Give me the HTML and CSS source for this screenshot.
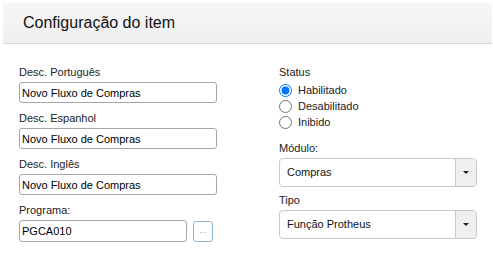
FILE: index.html
```html
<!DOCTYPE html>
<html lang="pt">
<head>
    <meta charset="UTF-8">
    <title>Configuração do item</title>
    <link rel="stylesheet" href="styles.css">
</head>
<body>
    <header class="panel-header">
        <h1>Configuração do item</h1>
    </header>

    <div class="item-form">
        <div class="col col-left">
            <label class="field-label">Desc. Português</label>
            <input class="text-input" type="text" value="Novo Fluxo de Compras">

            <label class="field-label">Desc. Espanhol</label>
            <input class="text-input" type="text" value="Novo Fluxo de Compras">

            <label class="field-label">Desc. Inglês</label>
            <input class="text-input" type="text" value="Novo Fluxo de Compras">

            <label class="field-label">Programa:</label>
            <div class="program-row">
                <input class="text-input program-input" type="text" value="PGCA010">
                <button class="dots-btn" type="button">...</button>
            </div>
        </div>

        <div class="col col-right">
            <label class="field-label">Status</label>
            <div class="radio-group">
                <label class="radio-row"><input type="radio" name="status" checked> Habilitado</label>
                <label class="radio-row"><input type="radio" name="status"> Desabilitado</label>
                <label class="radio-row"><input type="radio" name="status"> Inibido</label>
            </div>

            <label class="field-label module-label">Módulo:</label>
            <div class="fake-select">
                <span class="select-text">Compras</span>
                <span class="select-caret"><i></i></span>
            </div>

            <label class="field-label type-label">Tipo</label>
            <div class="fake-select">
                <span class="select-text">Função Protheus</span>
                <span class="select-caret"><i></i></span>
            </div>
        </div>
    </div>
</body>
</html>
```
FILE: styles.css
```css
/* Tela de configuracao do item */

body {
    margin: 0;
    padding: 0;
    background-color: #fff;
    font-family: "Liberation Sans", Arial, sans-serif;
    font-size: 11px;
    color: #222;
}

.panel-header {
    margin: 3px 1px 0 3px;
    height: 40px;
    padding-left: 20px;
    background: linear-gradient(to bottom, #f7f7f7, #eeeff0);
    border-bottom: 1px solid #d8d8d8;
}

.panel-header h1 {
    margin: 0;
    font-size: 16px;
    font-weight: normal;
    line-height: 40px;
    color: #111;
}

.item-form {
    display: flex;
    gap: 62px;
    padding: 22px 0 0 19px;
}

.col {
    display: flex;
    flex-direction: column;
    width: 198px;
}

.field-label {
    display: block;
    line-height: 13px;
    margin-bottom: 3px;
    color: #222;
}

.text-input {
    box-sizing: border-box;
    width: 198px;
    height: 21px;
    margin: 0 0 9px 0;
    padding: 0 2px;
    border: 1px solid #a5a5a5;
    border-radius: 3px;
    font-family: inherit;
    font-size: 11px;
    color: #000;
    outline: none;
}

.program-row {
    display: flex;
    align-items: flex-start;
    gap: 6px;
}

.program-input {
    width: 168px;
    height: 22px;
}

.dots-btn {
    box-sizing: border-box;
    width: 20px;
    height: 21px;
    margin-top: 1px;
    padding: 0 0 2px 0;
    background: #fff;
    border: 1px solid #8fb8d8;
    border-radius: 3px;
    font-family: inherit;
    font-size: 9px;
    line-height: 9px;
    color: #9ab;
    cursor: pointer;
}

.radio-group {
    display: flex;
    flex-direction: column;
}

.radio-row {
    display: flex;
    align-items: center;
    height: 16px;
    gap: 6px;
}

.radio-row input {
    width: 13px;
    height: 13px;
    margin: 0;
}

.module-label {
    margin-top: 12px;
}

.fake-select {
    box-sizing: border-box;
    display: flex;
    height: 29px;
    border: 1px solid #c8c8c8;
    border-radius: 4px;
    overflow: hidden;
    color: #111;
}

.select-text {
    flex: 1;
    padding-left: 7px;
    line-height: 27px;
}

.select-caret {
    display: flex;
    align-items: center;
    justify-content: center;
    width: 20px;
    background-color: #efefef;
    border-left: 1px solid #c8c8c8;
}

.select-caret i {
    width: 0;
    height: 0;
    border-left: 3px solid transparent;
    border-right: 3px solid transparent;
    border-top: 3px solid #222;
}

.type-label {
    margin-top: 7px;
}
```
